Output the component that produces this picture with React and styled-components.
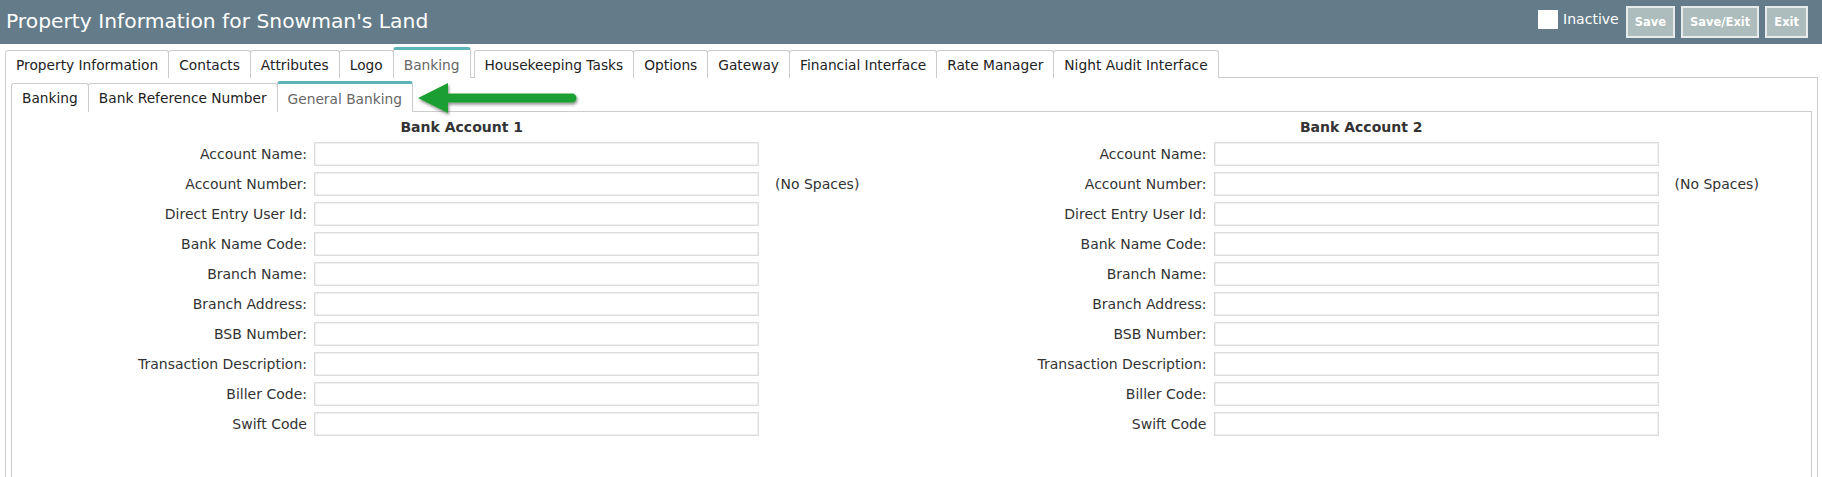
import React from "react";
import styled, { createGlobalStyle } from "styled-components";

const topTabs = [
  "Property Information",
  "Contacts",
  "Attributes",
  "Logo",
  "Banking",
  "Housekeeping Tasks",
  "Options",
  "Gateway",
  "Financial Interface",
  "Rate Manager",
  "Night Audit Interface",
];

const subTabs = ["Banking", "Bank Reference Number", "General Banking"];

const fields = [
  { label: "Account Name:" },
  { label: "Account Number:", note: "(No Spaces)" },
  { label: "Direct Entry User Id:" },
  { label: "Bank Name Code:" },
  { label: "Branch Name:" },
  { label: "Branch Address:" },
  { label: "BSB Number:" },
  { label: "Transaction Description:" },
  { label: "Biller Code:" },
  { label: "Swift Code" },
];

const App = () => {
  return (
    <>
      <GlobalStyle />
      <Header>
        <Title>Property Information for Snowman's Land</Title>
        <HeaderActions>
          <InactiveBox>
            <CheckBox />
            <InactiveLabel>Inactive</InactiveLabel>
          </InactiveBox>
          <ActionButton>Save</ActionButton>
          <ActionButton>Save/Exit</ActionButton>
          <ActionButton>Exit</ActionButton>
        </HeaderActions>
      </Header>
      <Main>
        <TabStrip>
          {topTabs.map(t => (
            <Tab key={t} active={t === "Banking"}>
              {t}
            </Tab>
          ))}
        </TabStrip>
        <OuterPanel>
          <SubTabStrip>
            {subTabs.map(t => (
              <SubTab key={t} active={t === "General Banking"}>
                {t}
              </SubTab>
            ))}
            <Arrow width="166" height="36" viewBox="0 0 166 36">
              <defs>
                <filter id="shadow" x="-10%" y="-30%" width="120%" height="170%">
                  <feDropShadow dx="1" dy="2" stdDeviation="1.6" floodColor="#000" floodOpacity="0.45" />
                </filter>
              </defs>
              <g filter="url(#shadow)">
                <line x1="28" y1="15" x2="156" y2="15" stroke="#1e9f31" strokeWidth="9" strokeLinecap="round" />
                <polygon points="2,15 32,0 32,30" fill="#1e9f31" />
              </g>
            </Arrow>
          </SubTabStrip>
          <InnerPanel>
            {[1, 2].map(n => (
              <AccountColumn key={n}>
                <AccountHeading>Bank Account {n}</AccountHeading>
                <FieldGrid>
                  {fields.map(f => (
                    <React.Fragment key={f.label}>
                      <FieldLabel>{f.label}</FieldLabel>
                      <FieldInput type="text" />
                      <FieldNote>{f.note || ""}</FieldNote>
                    </React.Fragment>
                  ))}
                </FieldGrid>
              </AccountColumn>
            ))}
          </InnerPanel>
        </OuterPanel>
      </Main>
    </>
  );
};

export default App;

const GlobalStyle = createGlobalStyle`
  html, body {
    margin: 0;
    padding: 0;
    background: #ffffff;
    font-family: "DejaVu Sans", Verdana, sans-serif;
    overflow: hidden;
  }
`;

const Header = styled.div`
  display: flex;
  align-items: center;
  justify-content: space-between;
  height: 44px;
  padding: 0 14px 0 6px;
  background-color: #647c89;
`;

const Title = styled.div`
  color: #ffffff;
  font-size: 20.3px;
  margin-top: -3px;
`;

const HeaderActions = styled.div`
  display: flex;
  align-items: center;
  gap: 6px;
`;

const InactiveBox = styled.div`
  display: flex;
  align-items: center;
  margin-right: 1px;
  margin-top: -6px;
`;

const CheckBox = styled.div`
  width: 20px;
  height: 19px;
  background-color: #ffffff;
  margin-right: 5px;
`;

const InactiveLabel = styled.span`
  color: #ffffff;
  font-size: 14px;
`;

const ActionButton = styled.button`
  height: 32px;
  padding: 0 7px;
  border: 2px solid #e6ebeb;
  background-color: #adbcbc;
  color: #ffffff;
  font-family: "DejaVu Sans", Verdana, sans-serif;
  font-size: 11.5px;
  font-weight: bold;
  cursor: pointer;
`;

const Main = styled.div`
  padding: 6px 4px 0 5px;
`;

const TabStrip = styled.div`
  display: flex;
  align-items: flex-end;
  height: 27px;
`;

const Tab = styled.div`
  position: relative;
  z-index: 1;
  display: flex;
  align-items: center;
  height: ${({ active }) => (active ? "26px" : "27px")};
  padding: ${({ active }) => (active ? "2px 10px 0" : "0 10px")};
  margin-right: ${({ active }) => (active ? "3px" : "-1px")};
  margin-bottom: -1px;
  border: 1px solid #cccccc;
  border-top: ${({ active }) => (active ? "3px solid #5cb4b9" : "1px solid #cccccc")};
  border-bottom: none;
  border-radius: 3px 3px 0 0;
  background-color: #ffffff;
  color: ${({ active }) => (active ? "#666666" : "#222222")};
  font-size: 13.75px;
  white-space: nowrap;
`;

const OuterPanel = styled.div`
  border: 1px solid #cccccc;
  border-bottom: none;
  padding: 5px 5px 0 5px;
  height: 394px;
`;

const SubTabStrip = styled.div`
  position: relative;
  display: flex;
  align-items: flex-end;
  height: 28px;
`;

const SubTab = styled(Tab)`
  height: ${({ active }) => (active ? "26px" : "28px")};
  margin-right: -1px;
`;

const Arrow = styled.svg`
  position: absolute;
  left: 405px;
  top: 0px;
  z-index: 2;
`;

const InnerPanel = styled.div`
  display: flex;
  border: 1px solid #cccccc;
  border-bottom: none;
  padding-top: 6px;
  height: 359px;
`;

const AccountColumn = styled.div`
  flex: 1;
  display: flex;
  flex-direction: column;
`;

const AccountHeading = styled.div`
  text-align: center;
  color: #333333;
  font-size: 14px;
  font-weight: bold;
  line-height: 18px;
  margin-bottom: 6px;
`;

const FieldGrid = styled.div`
  display: grid;
  grid-template-columns: 295px 445px auto;
  grid-auto-rows: 24px;
  column-gap: 7px;
  row-gap: 6px;
`;

const FieldLabel = styled.div`
  display: flex;
  align-items: center;
  justify-content: flex-end;
  color: #333333;
  font-size: 14px;
  white-space: nowrap;
`;

const FieldInput = styled.input`
  box-sizing: border-box;
  width: 445px;
  height: 24px;
  margin: 0;
  border: 1px solid #dddddd;
  box-shadow: inset 0 0 0 1px #f0f0f0;
  background: #ffffff;
  outline: none;
`;

const FieldNote = styled.div`
  display: flex;
  align-items: center;
  padding-left: 9px;
  color: #333333;
  font-size: 14px;
  white-space: nowrap;
`;
